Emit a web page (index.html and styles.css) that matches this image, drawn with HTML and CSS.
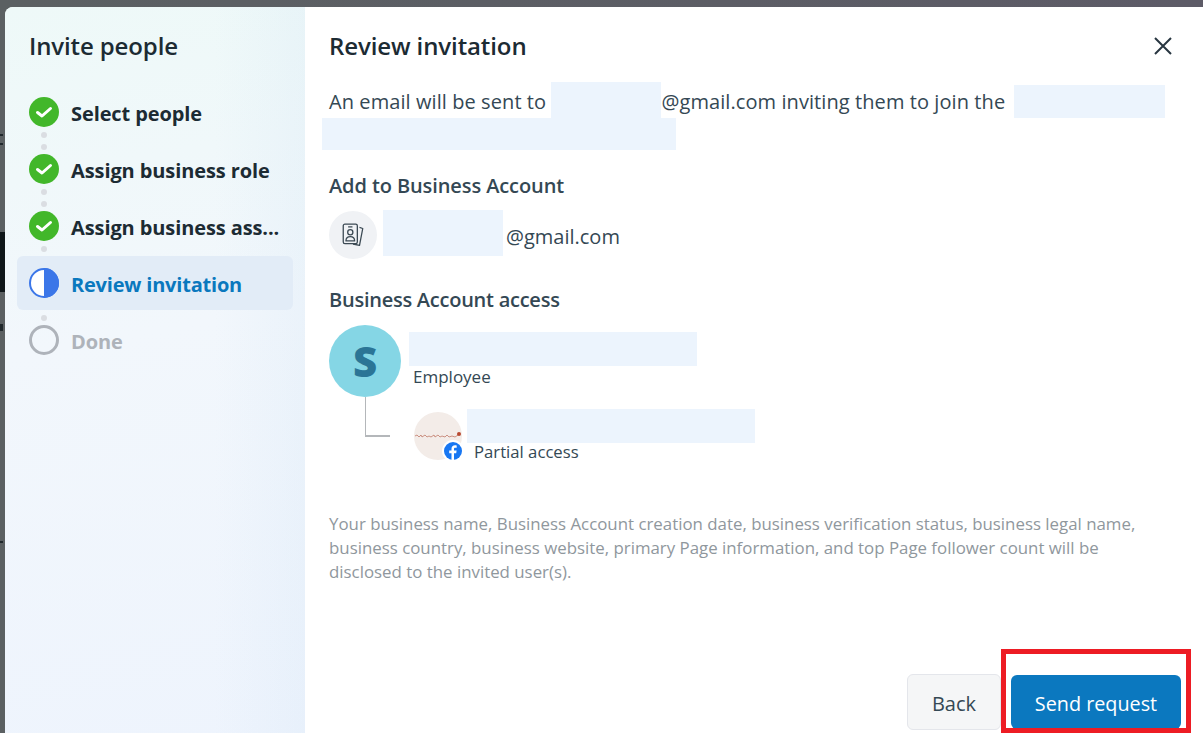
FILE: index.html
```html
<!DOCTYPE html>
<html lang="en">
<head>
<meta charset="utf-8">
<title>Invite people</title>
<link rel="stylesheet" href="styles.css">
</head>
<body>
<div class="backdrop">
  <div class="dark-band"></div>
  <i class="edge edge-a"></i><i class="edge edge-b"></i><i class="edge edge-c"></i><i class="edge edge-d"></i>
  <div class="modal">
    <aside class="sidebar">
      <h2 class="side-title">Invite people</h2>
      <ol class="steps">
        <li class="step">
          <svg class="step-icon" viewBox="0 0 30 30"><circle cx="15" cy="15" r="15" fill="#42b72a"/><path d="M8.500 15.500l4.500 3.500 8.500-7.500" fill="none" stroke="#fff" stroke-width="3" stroke-linecap="round" stroke-linejoin="round"/></svg>
          <span class="step-label">Select people</span>
        </li>
        <li class="dots"><i></i><i></i></li>
        <li class="step">
          <svg class="step-icon" viewBox="0 0 30 30"><circle cx="15" cy="15" r="15" fill="#42b72a"/><path d="M8.500 15.500l4.500 3.500 8.500-7.500" fill="none" stroke="#fff" stroke-width="3" stroke-linecap="round" stroke-linejoin="round"/></svg>
          <span class="step-label">Assign business role</span>
        </li>
        <li class="dots"><i></i><i></i></li>
        <li class="step">
          <svg class="step-icon" viewBox="0 0 30 30"><circle cx="15" cy="15" r="15" fill="#42b72a"/><path d="M8.500 15.500l4.500 3.500 8.500-7.500" fill="none" stroke="#fff" stroke-width="3" stroke-linecap="round" stroke-linejoin="round"/></svg>
          <span class="step-label">Assign business ass...</span>
        </li>
        <li class="dots dots-one"><i></i></li>
        <li class="step step-current">
          <svg class="step-icon" viewBox="0 0 30 30"><circle cx="15" cy="15" r="14" fill="#fff" stroke="#3b76e8" stroke-width="2"/><path d="M15 0a15 15 0 0 1 0 30z" fill="#3b76e8"/></svg>
          <span class="step-label">Review invitation</span>
        </li>
        <li class="dots dots-one"><i></i></li>
        <li class="step step-todo">
          <svg class="step-icon" viewBox="0 0 30 30"><circle cx="15" cy="15" r="13.500" fill="none" stroke="#aeb3ba" stroke-width="3"/></svg>
          <span class="step-label">Done</span>
        </li>
      </ol>
    </aside>
    <main class="main">
      <header class="main-head">
        <h2 class="main-title">Review invitation</h2>
        <svg class="close" viewBox="0 0 18 18"><path d="M1 1l16 16M17 1L1 17" fill="none" stroke="#283641" stroke-width="2"/></svg>
      </header>
      <p class="intro">An email will be sent to <span class="gap-name"></span>@gmail.com inviting them to join the</p>
      <div class="patch patch-a"></div>
      <div class="patch patch-b"></div>
      <div class="patch patch-c"></div>
      <h3 class="sub">Add to Business Account</h3>
      <div class="person">
        <span class="round">
          <svg viewBox="0 0 24 24" width="26" height="26" fill="none" stroke="#3c4a54" stroke-width="1.200" stroke-linejoin="round"><rect x="3" y="2" width="13" height="18" rx="1.500"/><path d="M7.500 4.500h4"/><circle cx="9.500" cy="9.500" r="2.400"/><path d="M5.500 17.500c0-2.800 1.800-4 4-4s4 1.200 4 4z"/><path d="M18 5l3 1-3 15.500-6-1.200"/></svg>
        </span>
        <span class="person-mail">@gmail.com</span>
      </div>
      <h3 class="sub sub-access">Business Account access</h3>
      <div class="tree">
        <div class="avatar-s">S</div>
        <div class="role-text"><div class="name-space"></div><div class="role">Employee</div></div>
      </div>
      <div class="child">
        <div class="elbow"></div>
        <div class="page-pic">
          <svg class="scribble" viewBox="0 0 44 4" width="44" height="4"><path d="M0 2l2-1 2 2 2-2 1 2 3-2 2 2 2-1 2 1 3-2 1 2 3-2 2 2 2-1 3 1 2-2 2 2 3-1 3 1 3-2" fill="none" stroke="#c07a68" stroke-width="0.800"/></svg>
          <span class="seed"></span>
          <span class="fb-badge"><svg viewBox="0 0 18 18" width="18" height="18"><circle cx="9" cy="9" r="9" fill="#1877f2"/><path d="M10 18v-6.800h2.200l.4-2.600H10V7c0-.8.3-1.300 1.400-1.300h1.300V3.400C12.400 3.400 11.700 3.300 11 3.300c-2.100 0-3.500 1.200-3.500 3.500v1.800H5.200v2.600h2.300V18z" fill="#fff"/></svg></span>
        </div>
        <div class="child-text"><div class="child-space"></div><div class="role role-child">Partial access</div></div>
      </div>
      <p class="note">Your business name, Business Account creation date, business verification status, business legal name, business country, business website, primary Page information, and top Page follower count will be disclosed to the invited user(s).</p>
      <footer class="actions">
        <button class="btn btn-back">Back</button>
        <button class="btn btn-send">Send request</button>
        <div class="highlight"></div>
      </footer>
    </main>
  </div>
</div>
</body>
</html>
```

FILE: styles.css
```css
* { box-sizing: border-box; }
html, body { margin: 0; height: 100%; overflow: hidden; }
body { font-family: "Open Sans", "Noto Sans", sans-serif; color: #1c2b33; }
.backdrop { position: relative; width: 1203px; height: 733px; background: linear-gradient(90deg, #5b6062, #5d5b67); padding: 7px 0 0 5px; }
.dark-band { position: absolute; left: 0; top: 232px; width: 5px; height: 60px; background: #0f1619; }
.edge { position: absolute; left: 0; width: 3px; height: 2px; background: #20282c; }
.edge-a { top: 134px; }
.edge-b { top: 143px; }
.edge-c { top: 324px; height: 7px; }
.edge-d { top: 541px; }
.modal { position: relative; display: flex; height: 726px; border-radius: 8px 0 0 0; overflow: hidden; background: #fff; }
.sidebar { width: 300px; flex: none; padding: 23px 12px 0; background: linear-gradient(90deg, transparent 70%, rgba(205, 225, 243, 0.2) 100%), linear-gradient(170deg, #eef9f8 0%, #f2f7fc 45%, #eef4fd 100%); }
.side-title { margin: 0 0 0 12px; font-size: 24px; line-height: 32px; font-weight: 600; height: 32px; letter-spacing: -0.12px; }
.steps { list-style: none; margin: 35px 0 0; padding: 0; }
.step { display: flex; align-items: center; height: 30px; padding-left: 12px; }
.step-icon { width: 30px; height: 30px; flex: none; }
.step-label { margin: 4px 0 0 12px; font-size: 20px; font-weight: 700; line-height: 30px; white-space: nowrap; letter-spacing: -0.1px; }
.dots { display: flex; flex-direction: column; align-items: flex-start; gap: 6px; height: 27px; padding: 5px 0 0 24px; }
.dots i { display: block; width: 6px; height: 6px; border-radius: 50%; background: #dadde2; }
.dots-one { height: 15px; }
.step-current { height: 54px; background: #e2ecf7; border-radius: 6px; }
.step-current .step-label { color: #0a78be; letter-spacing: -0.2px; }
.step-todo .step-label { color: #aeb3ba; }
.main { position: relative; flex: 1; padding: 23px 24px 0; }
.main-head { display: flex; justify-content: space-between; align-items: center; height: 32px; }
.main-title { margin: 0; font-size: 24px; font-weight: 600; line-height: 32px; letter-spacing: -0.1px; }
.close { width: 18px; height: 18px; margin-right: 7px; }
.intro { margin: 0; padding-top: 23px; font-size: 20px; line-height: 33px; height: 110px; color: #344854; white-space: nowrap; letter-spacing: 0.08px; }
.gap-name { display: inline-block; width: 110px; }
.patch { position: absolute; background: #ecf4fd; }
.patch-a { left: 246px; top: 75px; width: 110px; height: 36px; }
.patch-b { left: 709px; top: 78px; width: 151px; height: 33px; }
.patch-c { left: 17px; top: 111px; width: 354px; height: 32px; }
.sub { margin: 0; font-size: 20px; font-weight: 600; line-height: 28px; color: #344854; letter-spacing: -0.1px; }
.person { position: relative; display: flex; align-items: center; height: 48px; margin-top: 11px; }
.round { width: 48px; height: 48px; border-radius: 50%; background: #f0f2f5; display: flex; align-items: center; justify-content: center; flex: none; }
.person::after { content: ""; position: absolute; left: 54px; top: -1px; width: 120px; height: 46px; background: #ecf4fd; }
.person-mail { margin: 2px 0 0 129px; font-size: 20px; color: #344854; }
.sub-access { margin-top: 27px; letter-spacing: -0.25px; }
.tree { display: flex; height: 72px; margin-top: 11px; }
.avatar-s { width: 72px; height: 72px; border-radius: 50%; background: #85d6e5; color: #2b7596; font-size: 42px; font-weight: 800; line-height: 72px; text-align: center; flex: none; }
.role-text { margin-left: 8px; }
.name-space { width: 288px; height: 34px; margin-top: 7px; background: #ecf4fd; }
.role { margin: 0 0 0 4px; font-size: 17px; line-height: 22px; color: #344854; }
.child { position: relative; display: flex; height: 63px; }
.elbow { width: 25px; height: 40px; margin-left: 36px; border-left: 1px solid #b4b7ba; border-bottom: 2px solid #b4b7ba; flex: none; }
.page-pic { position: relative; width: 48px; height: 48px; margin: 15px 0 0 24px; border-radius: 50%; background: #f3ece8; flex: none; }
.scribble { position: absolute; left: 1px; top: 22px; }
.seed { position: absolute; left: 43px; top: 20px; width: 4px; height: 4px; border-radius: 50%; background: #b8492f; }
.fb-badge { position: absolute; left: 28px; top: 28px; width: 22px; height: 22px; border-radius: 50%; background: #fff; display: flex; align-items: center; justify-content: center; }
.child-text { margin-left: 5px; }
.child-space { width: 288px; height: 34px; margin-top: 12px; background: #ecf4fd; }
.role-child { margin: 0 0 0 7px; line-height: 18px; font-size: 16.700px; }
.note { margin: 0; position: absolute; left: 24px; top: 505px; width: 830px; font-size: 16.850px; line-height: 24.200px; color: #8f979d; }
.actions { position: absolute; right: 22px; top: 667px; display: flex; gap: 10px; align-items: flex-start; }
.btn { border-radius: 6px; font: 400 20px "Open Sans", "Noto Sans", sans-serif; cursor: pointer; padding: 2px 0 0; }
.btn-back { width: 94px; height: 56px; background: #f5f6f7; border: 1px solid #e4e6eb; color: #344854; }
.btn-send { width: 170px; height: 54px; margin-top: 1px; background: #0b78bf; border: 0; color: #fff; font-size: 19.800px; }
.highlight { position: absolute; left: 94px; top: -25px; width: 190px; height: 84px; border: 5px solid #ed1c24; pointer-events: none; }
```
